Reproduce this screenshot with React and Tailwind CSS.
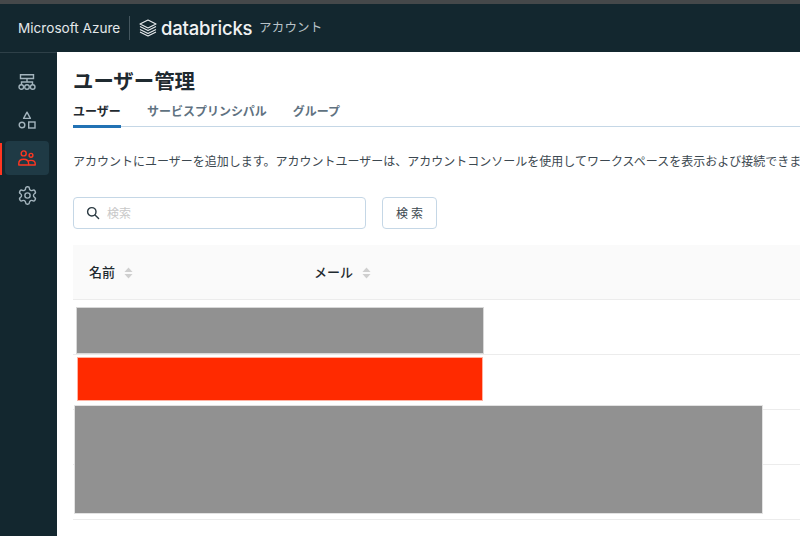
import React from "react";

const jp = { fontFamily: '"Inter","Noto Sans CJK JP",sans-serif' };

function Stack() {
  return (
    <svg width="18" height="18" viewBox="0 0 18 18" fill="none" stroke="#e8ecee" strokeWidth="1.1" strokeLinejoin="round">
      <path d="M9 1 L17 5 L9 9 L1 5 Z" />
      <path d="M1 7.6 L9 11.6 L17 7.6" />
      <path d="M1 10.4 L9 14.4 L17 10.4" />
      <path d="M1 13 L9 17 L17 13" />
    </svg>
  );
}

function WorkspaceIcon() {
  return (
    <svg width="18" height="16" viewBox="0 0 18 16" fill="none" stroke="#a3b4bd" strokeWidth="1.4">
      <path d="M2.5 0.8 H15.5 V4.5 H2.5 Z" />
      <path d="M9 4.5 V8 M3.5 11 V8 H14.5 V11" />
      <circle cx="3.3" cy="13" r="2.3" />
      <circle cx="9" cy="13" r="2.3" />
      <circle cx="14.7" cy="13" r="2.3" />
    </svg>
  );
}

function ShapesIcon() {
  return (
    <svg width="18" height="18" viewBox="0 0 18 18" fill="none" stroke="#a3b4bd" strokeWidth="1.4">
      <path d="M9 1.2 L12.4 7.4 H5.6 Z" strokeLinejoin="round" />
      <circle cx="4" cy="14" r="2.8" />
      <rect x="10.7" y="11" width="6.3" height="6" />
    </svg>
  );
}

function UsersIcon() {
  return (
    <svg width="18" height="16" viewBox="0 0 18 16" fill="none" stroke="#ff3621" strokeWidth="1.4" strokeLinejoin="round">
      <circle cx="5.7" cy="3.4" r="2.5" />
      <circle cx="13" cy="5.3" r="1.9" />
      <path d="M0.8 15 V13.5 C0.8 10.8 3 9.3 5.7 9.3 C8.4 9.3 10.6 10.8 10.6 13.5 V15 Z" />
      <path d="M10.6 15 H17.2 V13.8 C17.2 11.6 15.4 10.4 13 10.4 C11.8 10.4 10.8 10.7 10 11.2" />
    </svg>
  );
}

function GearIcon() {
  return (
    <svg width="21" height="21" viewBox="0 0 24 24" fill="none" stroke="#a3b4bd" strokeWidth="1.6" strokeLinejoin="round">
      <path d="M12.22 2h-.44a2 2 0 0 0-2 2v.18a2 2 0 0 1-1 1.73l-.43.25a2 2 0 0 1-2 0l-.15-.08a2 2 0 0 0-2.73.73l-.22.38a2 2 0 0 0 .73 2.73l.15.1a2 2 0 0 1 1 1.72v.51a2 2 0 0 1-1 1.74l-.15.09a2 2 0 0 0-.73 2.73l.22.38a2 2 0 0 0 2.73.73l.15-.08a2 2 0 0 1 2 0l.43.25a2 2 0 0 1 1 1.73V20a2 2 0 0 0 2 2h.44a2 2 0 0 0 2-2v-.18a2 2 0 0 1 1-1.73l.43-.25a2 2 0 0 1 2 0l.15.08a2 2 0 0 0 2.73-.73l.22-.39a2 2 0 0 0-.73-2.73l-.15-.08a2 2 0 0 1-1-1.74v-.5a2 2 0 0 1 1-1.74l.15-.09a2 2 0 0 0 .73-2.73l-.22-.38a2 2 0 0 0-2.73-.73l-.15.08a2 2 0 0 1-2 0l-.43-.25a2 2 0 0 1-1-1.73V4a2 2 0 0 0-2-2z" />
      <circle cx="12" cy="12" r="3" />
    </svg>
  );
}

function SearchIcon() {
  return (
    <svg width="14" height="14" viewBox="0 0 14 14" fill="none" stroke="#2b3a42" strokeWidth="1.4" strokeLinecap="round">
      <circle cx="5.8" cy="5.8" r="4.2" />
      <path d="M9 9 L12.6 12.6" />
    </svg>
  );
}

function Sort() {
  return (
    <svg width="9" height="12" viewBox="0 0 9 12" fill="#cfcfcf">
      <path d="M4.5 0.5 L8.5 5 H0.5 Z" />
      <path d="M4.5 11.5 L8.5 7 H0.5 Z" />
    </svg>
  );
}

function Row() {
  return <div className="h-[55px] border-b border-[#ececec]" />;
}

export default function App() {
  return (
    <div className="w-[800px] h-[536px] overflow-hidden bg-white flex flex-col" style={jp}>
      <div className="h-[4px] bg-[#45484a] shrink-0" />
      <header className="h-[48px] shrink-0 bg-[#13272f] flex items-center pl-[18px]">
        <span className="w-[102px] whitespace-nowrap text-[13.6px] text-[#e4e8ea]">Microsoft Azure</span>
        <div className="w-px h-[24px] bg-[#44565e] ml-[9px] mr-[9px]" />
        <Stack />
        <span className="ml-[4px] w-[90px] whitespace-nowrap text-[18.5px] font-medium text-[#f0f2f3] tracking-[-0.2px] leading-none">databricks</span>
        <span className="ml-[8px] text-[12.5px] text-[#b9c3c8] tracking-[0.2px]">アカウント</span>
      </header>
      <div className="flex flex-1 min-h-0">
        <aside className="relative w-[57px] shrink-0 bg-[#13272f] flex flex-col items-center pt-[10px] pr-[3px] border-t border-[#2e4048]">
          <div className="h-[38px] flex items-center justify-center w-full"><WorkspaceIcon /></div>
          <div className="h-[38px] flex items-center justify-center w-full"><ShapesIcon /></div>
          <div className="h-[34px] w-[44px] mt-[2px] rounded bg-[#1f3a45] flex items-center justify-center"><UsersIcon /></div>
          <div className="h-[38px] mt-[1px] flex items-center justify-center w-full"><GearIcon /></div>
          <div className="absolute left-0 top-[90px] w-[2px] h-[32px] bg-[#ff3621]" />
        </aside>
        <main className="relative flex-1 min-w-0 pl-[16px] overflow-hidden">
          <h1 className="mt-[15px] text-[20.4px] leading-[30px] font-bold text-[#1f2a30]">ユーザー管理</h1>
          <nav className="mt-[3px] flex h-[27px] border-b border-[#c5d7e6] gap-[26px] text-[12px] font-bold">
            <div className="relative h-[27px] w-[48px] text-[#1f2a30] leading-[24px]">
              ユーザー
              <div className="absolute left-0 right-0 bottom-[-1px] h-[3px] bg-[#2272b4]" />
            </div>
            <div className="text-[#5f7281] leading-[24px]">サービスプリンシパル</div>
            <div className="text-[#5f7281] leading-[24px]">グループ</div>
          </nav>
          <p className="mt-[26px] text-[12px] leading-[18px] text-[#3c4850] whitespace-nowrap">
            アカウントにユーザーを追加します。アカウントユーザーは、アカウントコンソールを使用してワークスペースを表示および接続できます。
          </p>
          <div className="mt-[26px] flex gap-[16px]">
            <div className="w-[293px] h-[32px] border border-[#c5d7e6] rounded flex items-center pl-[12px]">
              <SearchIcon />
              <span className="ml-[7px] mt-[1px] text-[12px] text-[#c8c8c8]">検索</span>
            </div>
            <div className="w-[55px] h-[32px] border border-[#c5d7e6] rounded flex items-center justify-center text-[12px] text-[#3c4850] tracking-[3px] pl-[3px] pt-[1px]">検索</div>
          </div>
          <div className="mt-[16px] h-[55px] pt-[1px] bg-[#fafafa] border-b border-[#ececec] flex items-center text-[13px] font-medium text-[#1f2a30]">
            <div className="w-[241px] pl-[16px] flex items-center gap-[9px]"><span>名前</span><Sort /></div>
            <div className="flex items-center gap-[9px]"><span>メール</span><Sort /></div>
          </div>
          <Row />
          <Row />
          <Row />
          <Row />
          <div className="absolute left-[19px] top-[255px] w-[408px] h-[47px] bg-[#919191] border border-[#d8d8d8]" />
          <div className="absolute left-[20px] top-[305px] w-[406px] h-[44px] bg-[#ff2a00] border border-[#ffb3a3]" />
          <div className="absolute left-[17px] top-[353px] w-[689px] h-[109px] bg-[#919191] border border-[#e2e2e2]" />
        </main>
      </div>
    </div>
  );
}
